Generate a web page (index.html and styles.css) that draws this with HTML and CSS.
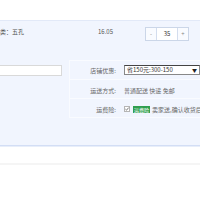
FILE: index.html
```html
<!DOCTYPE html>
<html>
<head>
<meta charset="utf-8">
<link rel="stylesheet" href="styles.css">
</head>
<body>
<div class="topbar"></div>
<div class="cart">
  <div class="item">
    <div class="item-name">类：五孔</div>
    <div class="item-price">16.05</div>
    <div class="qty">
      <span class="qty-btn qty-minus">-</span>
      <span class="qty-val">35</span>
      <span class="qty-btn qty-plus">+</span>
    </div>
  </div>
  <div class="order">
    <div class="order-left">
      <div class="msg-input"></div>
    </div>
    <div class="order-right">
      <div class="row">
        <div class="label">店铺优惠:</div>
        <div class="value">
          <div class="select"><span class="select-text">省150元:300-150</span><span class="select-arrow">▼</span></div>
        </div>
      </div>
      <div class="row">
        <div class="label">运送方式:</div>
        <div class="value">普通配送 快递 免邮</div>
      </div>
      <div class="row">
        <div class="label">运费险:</div>
        <div class="value">
          <svg class="check" width="6" height="6" viewBox="0 0 6 6"><rect x="0.5" y="0.5" width="5" height="5" fill="#fff" stroke="#b5b5b5"/><path d="M1.4 3.1 L2.5 4.2 L4.7 1.6" fill="none" stroke="#555" stroke-width="0.8"/></svg>
          <span class="badge">运费险</span>
          <span class="desc">卖家送,确认收货后赔付</span>
        </div>
      </div>
    </div>
  </div>
</div>
<div class="footer-line"></div>
</body>
</html>
```

FILE: styles.css
```css
html, body {
  margin: 0;
  padding: 0;
  background: #ffffff;
  overflow: hidden;
}
body {
  width: 200px;
  height: 200px;
  font-family: "Noto Sans CJK SC", "Noto Sans", sans-serif;
  font-size: 6px;
  color: #666666;
}
.topbar {
  height: 20px;
}
.cart {
  height: 124px;
  background: #f1f5fe;
  border-top: 1px solid #e2e9f8;
  border-bottom: 1px solid #d3def5;
  box-shadow: 0 1px 0 #e8eefa;
}
.item {
  display: flex;
  align-items: flex-start;
  height: 39px;
  padding-top: 6px;
  box-sizing: border-box;
}
.item-name {
  flex: 0 0 98px;
  margin-top: 1px;
  line-height: 8px;
  color: #555555;
}
.item-price {
  flex: 0 0 47px;
  margin-top: 1px;
  line-height: 8px;
  color: #555555;
}
.qty {
  display: flex;
  height: 14px;
  box-sizing: border-box;
  border: 1px solid #cbd6e8;
  background: #ffffff;
  line-height: 12px;
}
.qty-btn {
  width: 10px;
  text-align: center;
  color: #888888;
  background: #f9fbff;
}
.qty-minus {
  border-right: 1px solid #d3ddee;
}
.qty-plus {
  border-left: 1px solid #d3ddee;
}
.qty-val {
  width: 20px;
  text-align: center;
  color: #333333;
}
.order {
  display: flex;
  height: 58px;
}
.order-left {
  flex: 0 0 69px;
  padding-top: 5px;
  box-sizing: border-box;
}
.msg-input {
  margin-left: -5px;
  width: 67px;
  height: 11px;
  box-sizing: border-box;
  background: #ffffff;
  border: 1px solid #d9d9d9;
}
.order-right {
  flex: 1;
  border-left: 1px solid #f9fbff;
  border-bottom: 1px solid #f9fbff;
}
.row {
  display: flex;
  align-items: center;
  height: 18px;
  border-top: 1px solid #f9fbff;
  white-space: nowrap;
}
.row + .row .label,
.row + .row .value {
  padding-top: 2px;
}
.label {
  flex: 0 0 48px;
  text-align: right;
  padding-right: 2px;
  box-sizing: border-box;
  color: #666666;
}
.value {
  display: flex;
  align-items: center;
  margin-left: 6px;
  color: #666666;
  overflow: hidden;
}
.select {
  display: flex;
  align-items: center;
  justify-content: space-between;
  width: 76px;
  height: 10px;
  box-sizing: border-box;
  background: #ffffff;
  border: 1px solid #888888;
  border-top-color: #444444;
  padding: 0 2px 0 2px;
  line-height: 8px;
}
.select-text {
  color: #333333;
}
.select-arrow {
  font-size: 5px;
  color: #222222;
}
.check {
  display: block;
  margin-right: 3px;
}
.badge {
  background: #2f9e4f;
  color: #ffffff;
  font-size: 5px;
  line-height: 7px;
  padding: 0 1px;
  margin-right: 2px;
}
.desc {
  color: #666666;
}
.footer-line {
  margin-top: 17px;
  height: 2px;
  background: #f5f5f5;
}
```
